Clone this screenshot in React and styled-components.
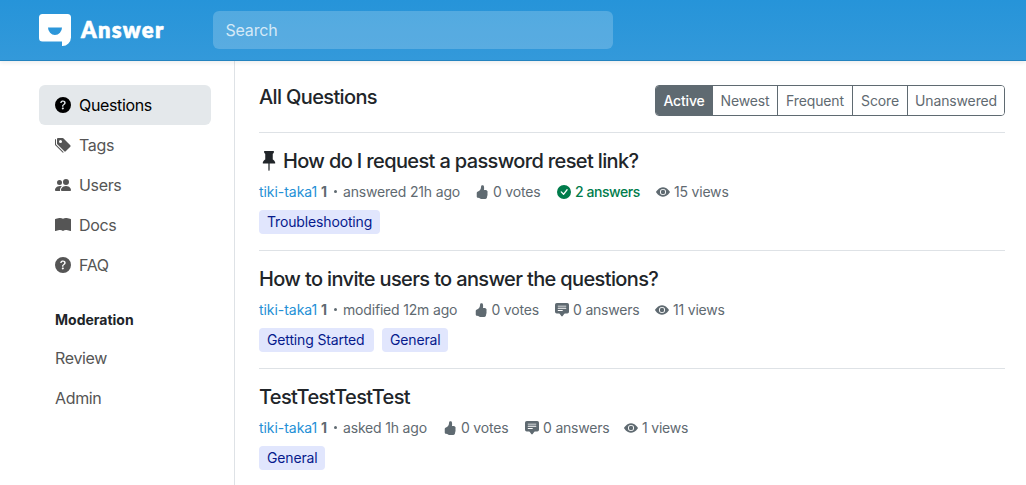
import React from 'react';
import styled, { createGlobalStyle, css } from 'styled-components';
import {
  BsQuestionCircleFill, BsTagsFill, BsPeopleFill, BsBookFill, BsPinFill,
  BsHandThumbsUpFill, BsCheckCircleFill, BsChatSquareTextFill, BsEyeFill,
} from 'react-icons/bs';

const Global = createGlobalStyle`
  *, *::before, *::after { box-sizing: border-box; }
  body {
    margin: 0;
    height: 485px;
    overflow: hidden;
    background: #fff;
    color: #212529;
    font: 400 16px/24px Inter, "Liberation Sans", sans-serif;
    -webkit-font-smoothing: antialiased;
  }
  svg { display: block; flex: none; }
`;

const Header = styled.header`
  position: relative;
  display: flex;
  align-items: center;
  height: 61px;
  padding: 0 0 1px 39px;
  background: linear-gradient(180deg, #2694d9, #3399da);
  border-bottom: 1px solid #2483bf;
  box-shadow: 0 2px 4px rgba(0, 0, 0, 0.07);
`;
const Brand = styled.div`
  display: flex;
  align-items: center;
  gap: 10px;
  width: 174px;
  color: #fff;
`;
const BrandName = styled.span`
  padding-top: 1px;
  font: 800 22px/32px Lato, sans-serif;
  letter-spacing: 1.25px;
  -webkit-text-stroke: 0.5px #fff;
`;
const Search = styled.div`
  width: 400px;
  height: 38px;
  padding: 7px 12.500px;
  border-radius: 6px;
  background: rgba(255, 255, 255, 0.2);
  color: rgba(255, 255, 255, 0.75);
  letter-spacing: -0.2px;
`;

const Page = styled.div`
  display: flex;
  height: 424px;
`;
const Sidebar = styled.nav`
  width: 235px;
  padding: 24px 23px 0 39px;
  border-right: 1px solid #dee2e6;
`;
const NavItem = styled.a`
  display: flex;
  align-items: center;
  gap: 8px;
  height: 40px;
  padding: 0 16px;
  border-radius: 6px;
  color: ${p => (p.$active ? '#000' : '#555')};
  background: ${p => (p.$active ? '#e4e8eb' : 'transparent')};
  letter-spacing: -0.35px;
`;
const NavHeading = styled.h6`
  margin: 24px 0 8px;
  padding: 0 16px;
  font-size: 14px;
  font-weight: 700;
  line-height: 21px;
`;

const Main = styled.main`
  width: 770px;
  padding: 24px 0 0 24px;
`;
const Toolbar = styled.div`
  display: flex;
  justify-content: space-between;
  height: 47px;
`;
const Heading = styled.h5`
  margin: 0;
  font-size: 20px;
  font-weight: 500;
  line-height: 24px;
  letter-spacing: -0.64px;
`;
const Group = styled.div`
  display: flex;
  width: 350px;
  height: 31px;
  border: 1px solid #5f6a71;
  border-radius: 4px;
  overflow: hidden;
`;
const Tab = styled.button`
  flex: 0 0 ${p => p.$w}px;
  padding: 0;
  border: 0;
  border-left: ${p => (p.$active ? '0' : '1px solid #5f6a71')};
  background: ${p => (p.$active ? '#5f6a71' : '#fff')};
  color: ${p => (p.$active ? '#fff' : '#5f6a71')};
  font: ${p => (p.$active ? 500 : 400)} 14px/21px Inter, sans-serif;
  letter-spacing: ${p => (p.$active ? -0.2 : -0.13)}px;
`;

const Item = styled.article`
  height: 118px;
  padding-top: 16px;
  border-top: 1px solid #dee2e6;
`;
const Title = styled.div`
  display: flex;
  align-items: center;
  height: 24px;
  gap: 4px;
`;
const Meta = styled.div`
  display: flex;
  height: 21px;
  margin: 8px 0;
  color: #5f6a71;
  font-size: 14px;
  line-height: 21px;
  white-space: nowrap;
`;
const Byline = styled.div`
  display: flex;
  align-items: center;
  flex: 0 0 ${p => p.$w}px;
  letter-spacing: -0.18px;
`;
const Author = styled.a`
  flex: 0 0 62px;
  color: #2490d6;
  letter-spacing: -0.05px;
`;
const Rank = styled.b`
  flex: 0 0 13px;
`;
const Dot = styled.i`
  width: 3px;
  height: 3px;
  margin-right: 6px;
  border-radius: 50%;
  background: currentColor;
`;
const Stat = styled.span`
  display: flex;
  align-items: center;
  gap: 4px;
  flex: 0 0 ${p => p.$w}px;
  letter-spacing: -0.2px;
  ${p => p.$accepted && css`
    color: #007c4b;
    font-weight: 500;
    letter-spacing: -0.45px;
  `}
`;
const Tags = styled.div`
  display: flex;
  gap: 8px;
`;
const Tag = styled.a`
  width: ${p => p.$w}px;
  height: 24px;
  border-radius: 4px;
  background: #e1e6fd;
  color: #061a8c;
  font-size: 14px;
  line-height: 24px;
  padding-left: 8px;
  letter-spacing: -0.15px;
  white-space: nowrap;
`;

const Logo = () => (
  <svg width="32" height="32" viewBox="0 0 32 32" fill="currentColor">
    <path fillRule="evenodd" d="M3.500 0h25A3.500 3.500 0 0 1 32 3.500v19.500a8.800 8.800 0 0 1-9 9v-4.400H3.500A3.500 3.500 0 0 1 0 24.100V3.500A3.500 3.500 0 0 1 3.500 0Zm5.500 13.500a7 7.500 0 0 0 14 0Z" />
  </svg>
);

const nav = [
  ['Questions', BsQuestionCircleFill],
  ['Tags', BsTagsFill],
  ['Users', BsPeopleFill],
  ['Docs', BsBookFill],
  ['FAQ', BsQuestionCircleFill],
];
const tabs = [['Active', 56], ['Newest', 65], ['Frequent', 75], ['Score', 55], ['Unanswered', 97]];
const questions = [
  {
    title: 'How do I request a password reset link?', pinned: true, when: 'answered 21h ago',
    answers: 2, views: 15, tags: [['Troubleshooting', 121]], widths: [216, 82, 99],
  },
  {
    title: 'How to invite users to answer the questions?', when: 'modified 12m ago',
    answers: 0, views: 11, tags: [['Getting Started', 115], ['General', 66]], widths: [214.5, 81.5, 100],
  },
  {
    title: 'TestTestTestTest', when: 'asked 1h ago',
    answers: 0, views: 1, tags: [['General', 66]], widths: [184, 82, 99],
  },
];

const Question = ({ q }) => (
  <Item>
    <Title>
      {q.pinned && <BsPinFill size={20} />}
      <Heading as="h2">{q.title}</Heading>
    </Title>
    <Meta>
      <Byline $w={q.widths[0]}>
        <Author>tiki-taka1</Author><Rank>1</Rank><Dot />{q.when}
      </Byline>
      <Stat $w={q.widths[1]}><BsHandThumbsUpFill size={14} />0 votes</Stat>
      <Stat $w={q.widths[2]} $accepted={q.answers > 0}>
        {q.answers > 0 ? <BsCheckCircleFill size={14} /> : <BsChatSquareTextFill size={14} />}
        {q.answers} answers
      </Stat>
      <Stat $w={90}><BsEyeFill size={14} />{q.views} views</Stat>
    </Meta>
    <Tags>{q.tags.map(([t, w]) => <Tag key={t} $w={w}>{t}</Tag>)}</Tags>
  </Item>
);

export default function App() {
  return (
    <>
      <Global />
      <Header>
        <Brand><Logo /><BrandName>Answer</BrandName></Brand>
        <Search>Search</Search>
      </Header>
      <Page>
        <Sidebar>
          {nav.map(([label, Icon], i) => (
            <NavItem key={label} $active={i === 0}><Icon size={16} />{label}</NavItem>
          ))}
          <NavHeading>Moderation</NavHeading>
          <NavItem>Review</NavItem>
          <NavItem>Admin</NavItem>
        </Sidebar>
        <Main>
          <Toolbar>
            <Heading>All Questions</Heading>
            <Group>
              {tabs.map(([t, w], i) => <Tab key={t} $w={w} $active={i === 0}>{t}</Tab>)}
            </Group>
          </Toolbar>
          {questions.map(q => <Question key={q.title} q={q} />)}
        </Main>
      </Page>
    </>
  );
}
